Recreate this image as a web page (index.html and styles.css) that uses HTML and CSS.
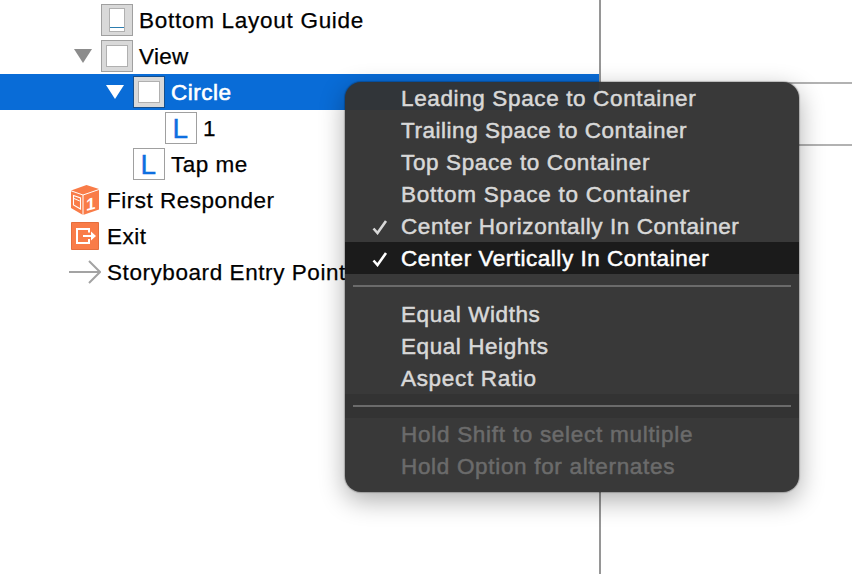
FILE: index.html
```html
<!DOCTYPE html>
<html lang="en">
<head>
<meta charset="utf-8">
<title>Document Outline</title>
<link rel="stylesheet" href="styles.css">
</head>
<body>
<div class="window">
  <nav class="outline">
    <div class="row depth-2">
      <span class="toggle"></span>
      <svg class="icon" viewBox="0 0 32 32"><rect x=".5" y=".5" width="31" height="31" fill="#d9d9d9" stroke="#a0a0a0"/><rect x="8.500" y="4.500" width="15" height="23" fill="#fff" stroke="#b0b0b0"/><path d="M9 23.500h14" stroke="#2d7daf"/></svg>
      <span class="label guide">Bottom Layout Guide</span>
    </div>
    <div class="row depth-2">
      <svg class="toggle" viewBox="0 0 18 14"><path d="M0 0h18L9 14z" fill="#8c8c8c"/></svg>
      <svg class="icon" viewBox="0 0 32 32"><rect x=".5" y=".5" width="31" height="31" fill="#d9d9d9" stroke="#a0a0a0"/><rect x="5.500" y="5.500" width="21" height="21" fill="#fff" stroke="#b0b0b0"/></svg>
      <span class="label view">View</span>
    </div>
    <div class="row depth-3 selected">
      <svg class="toggle" viewBox="0 0 18 14"><path d="M0 0h18L9 14z" fill="#fff"/></svg>
      <svg class="icon" viewBox="0 0 32 32"><rect x=".5" y=".5" width="31" height="31" fill="#d9d9d9" stroke="#174f8c"/><rect x="5.500" y="5.500" width="21" height="21" fill="#fff" stroke="#b0b0b0"/></svg>
      <span class="label short">Circle</span>
    </div>
    <div class="row depth-4">
      <span class="toggle"></span>
      <svg class="icon" viewBox="0 0 32 32"><rect x=".5" y=".5" width="31" height="31" fill="#fff" stroke="#a0a0a0"/><text class="letter" x="7.500" y="25.500">L</text></svg>
      <span class="label">1</span>
    </div>
    <div class="row depth-3">
      <span class="toggle"></span>
      <svg class="icon" viewBox="0 0 32 32"><rect x=".5" y=".5" width="31" height="31" fill="#fff" stroke="#a0a0a0"/><text class="letter" x="7.500" y="25.500">L</text></svg>
      <span class="label short">Tap me</span>
    </div>
    <div class="row depth-1">
      <span class="toggle"></span>
      <svg class="icon" viewBox="0 0 32 32"><path d="M2 6.500 17.500 1 30 5v20.500L14 31 2 24z" fill="#f97c48"/><path d="M2 6.800 14 11 30 5.500M14 11v20" fill="none" stroke="#fff" stroke-width="1"/><path d="M4.500 11.500 11.500 14v11l-7-4z" fill="none" stroke="#fff" stroke-width="1.100"/><path d="M5 14.500 10.800 17" stroke="#fff" stroke-width="1"/><text class="digit" transform="translate(17 27) skewY(-14)">1</text></svg>
      <span class="label short">First Responder</span>
    </div>
    <div class="row depth-1">
      <span class="toggle"></span>
      <svg class="icon" viewBox="0 0 32 32"><path d="M2.500 2.500h27v27h-27z" fill="#f97c48" stroke="#e56e3d"/><path d="M20 12.500V9H8v14h12v-4M14 16h10" fill="none" stroke="#fff" stroke-width="2"/><path d="m22 11.500 5 4.500-5 4.500z" fill="#fff"/></svg>
      <span class="label short">Exit</span>
    </div>
    <div class="row depth-1">
      <span class="toggle"></span>
      <svg class="icon" viewBox="0 0 32 32"><path d="M0 16h31M20 5l11 11-11 11" fill="none" stroke="#a3a3a3" stroke-width="2"/></svg>
      <span class="label entry">Storyboard Entry Point</span>
    </div>
  </nav>
  <main class="canvas"><div class="scene-bar"></div></main>
</div>
<div class="menu">
  <div class="item leading">Leading Space to Container</div>
  <div class="item trailing">Trailing Space to Container</div>
  <div class="item top">Top Space to Container</div>
  <div class="item bottom">Bottom Space to Container</div>
  <div class="item horizontal"><svg class="check" viewBox="0 0 16 16"><path d="m1.500 9.500 4 4.500L14 2" fill="none" stroke="currentColor" stroke-width="2.600"/></svg>Center Horizontally In Container</div>
  <div class="item vertical active"><svg class="check" viewBox="0 0 16 16"><path d="m1.500 9.500 4 4.500L14 2" fill="none" stroke="currentColor" stroke-width="2.600"/></svg>Center Vertically In Container</div>
  <div class="separator"></div>
  <div class="item widths">Equal Widths</div>
  <div class="item heights">Equal Heights</div>
  <div class="item ratio">Aspect Ratio</div>
  <div class="separator shaded"></div>
  <div class="item shift disabled">Hold Shift to select multiple</div>
  <div class="item option disabled">Hold Option for alternates</div>
</div>
</body>
</html>
```
FILE: styles.css
```css
* { box-sizing: border-box; }
body {
  margin: 0;
  background: #fff;
  font-family: "Liberation Sans", Arial, sans-serif;
  font-size: 22.5px;
  letter-spacing: 0.57px;
  color: #000;
}
.window {
  display: flex;
  width: 852px;
  height: 574px;
  overflow: hidden;
}
.outline {
  width: 601px;
  padding-top: 2px;
  border-right: 2px solid #969696;
}
.row {
  display: flex;
  align-items: center;
  height: 36px;
  white-space: nowrap;
}
.depth-1 { padding-left: 42px; }
.depth-2 { padding-left: 74px; }
.depth-3 { padding-left: 106px; }
.depth-4 { padding-left: 138px; }
.toggle { width: 18px; height: 14px; margin-right: 9px; flex: none; }
.icon { width: 32px; height: 32px; margin-right: 6px; flex: none; }
.letter { font-size: 28px; letter-spacing: 0; fill: #0d6fe0; stroke: #0d6fe0; stroke-width: 0.4; }
.digit { font-size: 17px; font-weight: bold; letter-spacing: 0; fill: #fff; }
.label { padding-top: 2px; -webkit-text-stroke: 0.25px currentColor; }
.guide { letter-spacing: 0.72px; }
.view { letter-spacing: 0.3px; }
.short { letter-spacing: 0.5px; }
.selected { background: #096cd7; color: #fff; }
.selected .label { -webkit-text-stroke: 0.6px #fff; }
.canvas { flex: 1; padding-top: 82px; }
.scene-bar {
  height: 64px;
  border-top: 2px solid #b2b2b2;
  border-bottom: 2px solid #b2b2b2;
}
.menu {
  position: absolute;
  left: 345px;
  top: 82px;
  width: 454px;
  height: 410px;
  overflow: hidden;
  border-radius: 16px;
  background: linear-gradient(#313539, #313539) 0 0 / 254px 28px no-repeat, #393939;
  box-shadow: 0 0 1px 1px rgba(0, 0, 0, .22), 0 8px 26px rgba(0, 0, 0, .33);
}
.item {
  position: relative;
  height: 32px;
  padding-left: 56px;
  line-height: 34px;
  white-space: nowrap;
  color: #d8d8d8;
  -webkit-text-stroke: 0.5px currentColor;
}
.leading, .top { letter-spacing: 0.63px; }
.trailing { letter-spacing: 0.53px; }
.bottom { letter-spacing: 0.76px; }
.vertical { letter-spacing: 0.52px; }
.ratio, .option { letter-spacing: 0.68px; }
.shift { letter-spacing: 0.72px; }
.check {
  position: absolute;
  left: 27px;
  top: 9px;
  width: 16px;
  height: 16px;
}
.active { background: #1b1b1b; color: #fff; }
.disabled { color: #6b6b6b; }
.separator {
  display: flex;
  align-items: center;
  height: 24px;
  padding: 0 8px;
}
.separator::before { content: ""; flex: 1; height: 2px; background: #6b6b6b; }
.shaded { background: #333; }
```
